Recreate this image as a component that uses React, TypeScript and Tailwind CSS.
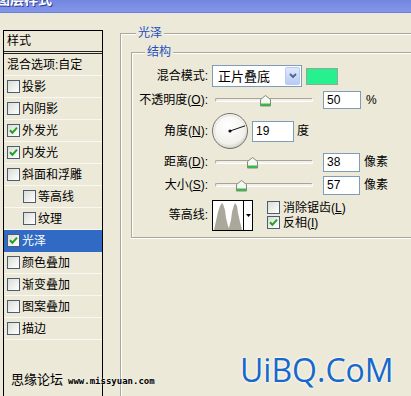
import React from 'react';

interface StyleItem {
  label: string;
  checked?: boolean;
  indent?: boolean;
  selected?: boolean;
}

const styleItems: StyleItem[] = [
  { label: '投影' },
  { label: '内阴影' },
  { label: '外发光', checked: true },
  { label: '内发光', checked: true },
  { label: '斜面和浮雕' },
  { label: '等高线', indent: true },
  { label: '纹理', indent: true },
  { label: '光泽', checked: true, selected: true },
  { label: '颜色叠加' },
  { label: '渐变叠加' },
  { label: '图案叠加' },
  { label: '描边' },
];

function CheckBox({ checked }: { checked?: boolean }) {
  return (
    <span className="flex h-[13px] w-[13px] shrink-0 items-center justify-center border border-[#4a5d72] bg-gradient-to-br from-[#dcdcd5] to-white">
      {checked && (
        <svg width="9" height="9" viewBox="0 0 9 9">
          <path d="M1 4.2 L3.4 6.8 L8 1.6" stroke="#21a121" strokeWidth="2" fill="none" />
        </svg>
      )}
    </span>
  );
}

function Slider({ pos }: { pos: number }) {
  return (
    <div className="relative ml-[7px] h-[14px] w-[100px] shrink-0">
      <div className="absolute left-0 right-[2px] top-[5px] h-[4px] rounded-full border border-[#a7a49a] border-b-white border-r-white bg-[#f1efe6]" />
      <svg className="absolute top-[2px]" style={{ left: pos - 5 }} width="11" height="12" viewBox="0 0 11 12">
        <path d="M0.5 11 V4.5 L5.5 0.5 L10.5 4.5 V11 Z" fill="#f7f7f2" stroke="#7e8c7e" />
        <rect x="1" y="8.5" width="9" height="2.5" fill="#3cb54b" />
      </svg>
    </div>
  );
}

function NumBox({ value, w, h }: { value: string; w: string; h: string }) {
  return (
    <div className={`${w} ${h} flex shrink-0 items-center border border-[#7f9db9] bg-white pl-[3px] text-[12px] leading-none`}>
      {value}
    </div>
  );
}

function Label({ children }: { children: React.ReactNode }) {
  return <span className="w-[76px] shrink-0 text-right text-[12px] leading-none">{children}</span>;
}

function Dial({ angle }: { angle: number }) {
  const r = (angle * Math.PI) / 180;
  const x = 18 + 16 * Math.cos(r);
  const y = 18 - 16 * Math.sin(r);
  return (
    <svg width="37" height="37" viewBox="0 0 37 37" className="ml-[4px] shrink-0">
      <defs>
        <radialGradient id="dialg" cx="45%" cy="35%" r="65%">
          <stop offset="0%" stopColor="#ffffff" />
          <stop offset="80%" stopColor="#f2f1ec" />
          <stop offset="100%" stopColor="#c9c8c0" />
        </radialGradient>
      </defs>
      <circle cx="18" cy="18" r="17.5" fill="url(#dialg)" stroke="#6f6f6f" />
      <circle cx="18" cy="18" r="15.5" fill="none" stroke="#e6e5dd" />
      <line x1="18" y1="18" x2={x} y2={y} stroke="#111" strokeWidth="1" />
      <circle cx="18" cy="18" r="1.6" fill="#111" />
    </svg>
  );
}

function ContourPicker() {
  return (
    <div className="ml-[4px] flex h-[31px] w-[41px] shrink-0 border border-black bg-white">
      <svg width="30" height="29" viewBox="0 0 30 29" className="shrink-0">
        <path
          d="M1 29 L3 20 L5 11 L7 5 L9 2 L10 3 L12 9 L13 17 L15 25 L16 27 L18 19 L19 11 L21 4 L22 2 L24 5 L25 12 L27 21 L29 29 Z"
          fill="#aaa79b"
        />
      </svg>
      <div className="flex w-[9px] items-center justify-center border-l border-black">
        <svg width="5" height="3" viewBox="0 0 5 3">
          <path d="M0 0 H5 L2.5 3 Z" fill="#000" />
        </svg>
      </div>
    </div>
  );
}

export default function App() {
  return (
    <div className="relative h-[396px] w-[411px] overflow-hidden bg-[#ece9d8] font-['Liberation_Sans','Noto_Sans_CJK_SC',sans-serif] text-black">
      {/* title bar, cut at the top */}
      <div className="h-[13px] overflow-hidden bg-gradient-to-b from-[#7386e0] to-[#8396ea] border-b border-[#6a7fd6]">
        <span className="-ml-[4px] -mt-[9px] block text-[14px] font-bold leading-[16px] text-white [text-shadow:1px_1px_0_#2a3c96]">
          图层样式
        </span>
      </div>

      <div className="flex items-start">
        {/* style list */}
        <div className="ml-[3px] mt-[17px] h-[400px] w-[100px] shrink-0 border border-black">
          <div className="flex h-[20px] items-center pl-[3px] text-[12px] leading-none">样式</div>
          <div className="h-[3px] border-y border-[#222]" />
          <div className="flex h-[22px] items-center border-b border-[#f9f8f2] pl-[3px] text-[12px] leading-none">
            混合选项:自定
          </div>
          {styleItems.map((it) => (
            <div
              key={it.label}
              className={`flex h-[22px] items-center gap-[2px] border-b text-[12px] leading-none ${
                it.indent ? 'pl-[19px]' : 'pl-[3px]'
              } ${it.selected ? 'border-[#316ac5] bg-[#316ac5] text-white' : 'border-[#f9f8f2]'}`}
            >
              <CheckBox checked={it.checked} />
              <span>{it.label}</span>
            </div>
          ))}
        </div>

        {/* 光泽 group */}
        <div className="relative ml-[17px] mt-[20px] h-[400px] w-[300px] shrink-0 border-l border-t border-[#aca899] shadow-[inset_1px_1px_0_#fff]">
          <span className="absolute -top-[8px] left-[15px] bg-[#ece9d8] px-[2px] text-[12px] leading-[14px] text-[#1f4fbf]">
            光泽
          </span>

          <div className="relative ml-[10px] mt-[18px] h-[186px] w-[300px] border border-r-0 border-[#aca899] pt-[11px] shadow-[inset_1px_1px_0_#fff,0_1px_0_#fff]">
            <span className="absolute -top-[8px] left-[13px] bg-[#ece9d8] px-[2px] text-[12px] leading-[14px] text-[#1f4fbf]">
              结构
            </span>

            <div className="flex h-[24px] items-center">
              <Label>混合模式:</Label>
              <div className="ml-[4px] flex h-[22px] w-[90px] shrink-0 items-center border border-[#7f9db9] bg-white">
                <span className="flex-1 pl-[5px] text-[13px] leading-none">正片叠底</span>
                <span className="mr-[1px] flex h-[18px] w-[15px] items-center justify-center rounded-[2px] border border-[#b9caf0] bg-gradient-to-b from-[#dfe8fd] to-[#b8cbf6]">
                  <svg width="8" height="6" viewBox="0 0 8 6">
                    <path d="M1 1 L4 4 L7 1" stroke="#4d6185" strokeWidth="1.8" fill="none" />
                  </svg>
                </span>
              </div>
              <div className="ml-[4px] h-[17px] w-[32px] shrink-0 border border-[#8fa897] bg-[#27f08f]" />
            </div>

            <div className="flex h-[24px] items-center">
              <Label>
                不透明度(<u>O</u>):
              </Label>
              <Slider pos={50} />
              <div className="ml-[8px]">
                <NumBox value="50" w="w-[38px]" h="h-[18px]" />
              </div>
              <span className="ml-[5px] text-[12px] leading-none">%</span>
            </div>

            <div className="flex h-[38px] items-center">
              <Label>
                角度(<u>N</u>):
              </Label>
              <Dial angle={19} />
              <div className="ml-[3px]">
                <NumBox value="19" w="w-[42px]" h="h-[21px]" />
              </div>
              <span className="ml-[3px] text-[12px] leading-none">度</span>
            </div>

            <div className="flex h-[24px] items-center">
              <Label>
                距离(<u>D</u>):
              </Label>
              <Slider pos={37} />
              <div className="ml-[8px]">
                <NumBox value="38" w="w-[37px]" h="h-[19px]" />
              </div>
              <span className="ml-[4px] text-[12px] leading-none">像素</span>
            </div>

            <div className="flex h-[22px] items-center">
              <Label>
                大小(<u>S</u>):
              </Label>
              <Slider pos={26} />
              <div className="ml-[8px]">
                <NumBox value="57" w="w-[37px]" h="h-[19px]" />
              </div>
              <span className="ml-[4px] text-[12px] leading-none">像素</span>
            </div>

            <div className="mt-[1px] flex h-[36px] items-center">
              <Label>等高线:</Label>
              <ContourPicker />
              <div className="ml-[14px] flex flex-col gap-[2px] text-[12px] leading-none">
                <div className="flex items-center gap-[3px]">
                  <CheckBox />
                  <span>
                    消除锯齿(<u>L</u>)
                  </span>
                </div>
                <div className="flex items-center gap-[3px]">
                  <CheckBox checked />
                  <span>
                    反相(<u>I</u>)
                  </span>
                </div>
              </div>
            </div>
          </div>
        </div>
      </div>

      {/* watermarks */}
      <span className="absolute left-[11px] top-[373px] text-[13px] leading-none">思缘论坛</span>
      <span className="absolute left-[68px] top-[377px] font-['DejaVu_Sans_Mono',monospace] text-[9px] font-bold leading-none tracking-[0px] text-black [text-shadow:0_0_2px_#fff]">
        www.missyuan.com
      </span>
      <span className="absolute left-[240px] top-[350px] font-['Open_Sans',sans-serif] text-[32px] leading-[40px] text-[#1769c9] [text-shadow:0_0_2px_#fff,0_0_3px_#fff]">
        UiBQ.CoM
      </span>
    </div>
  );
}
